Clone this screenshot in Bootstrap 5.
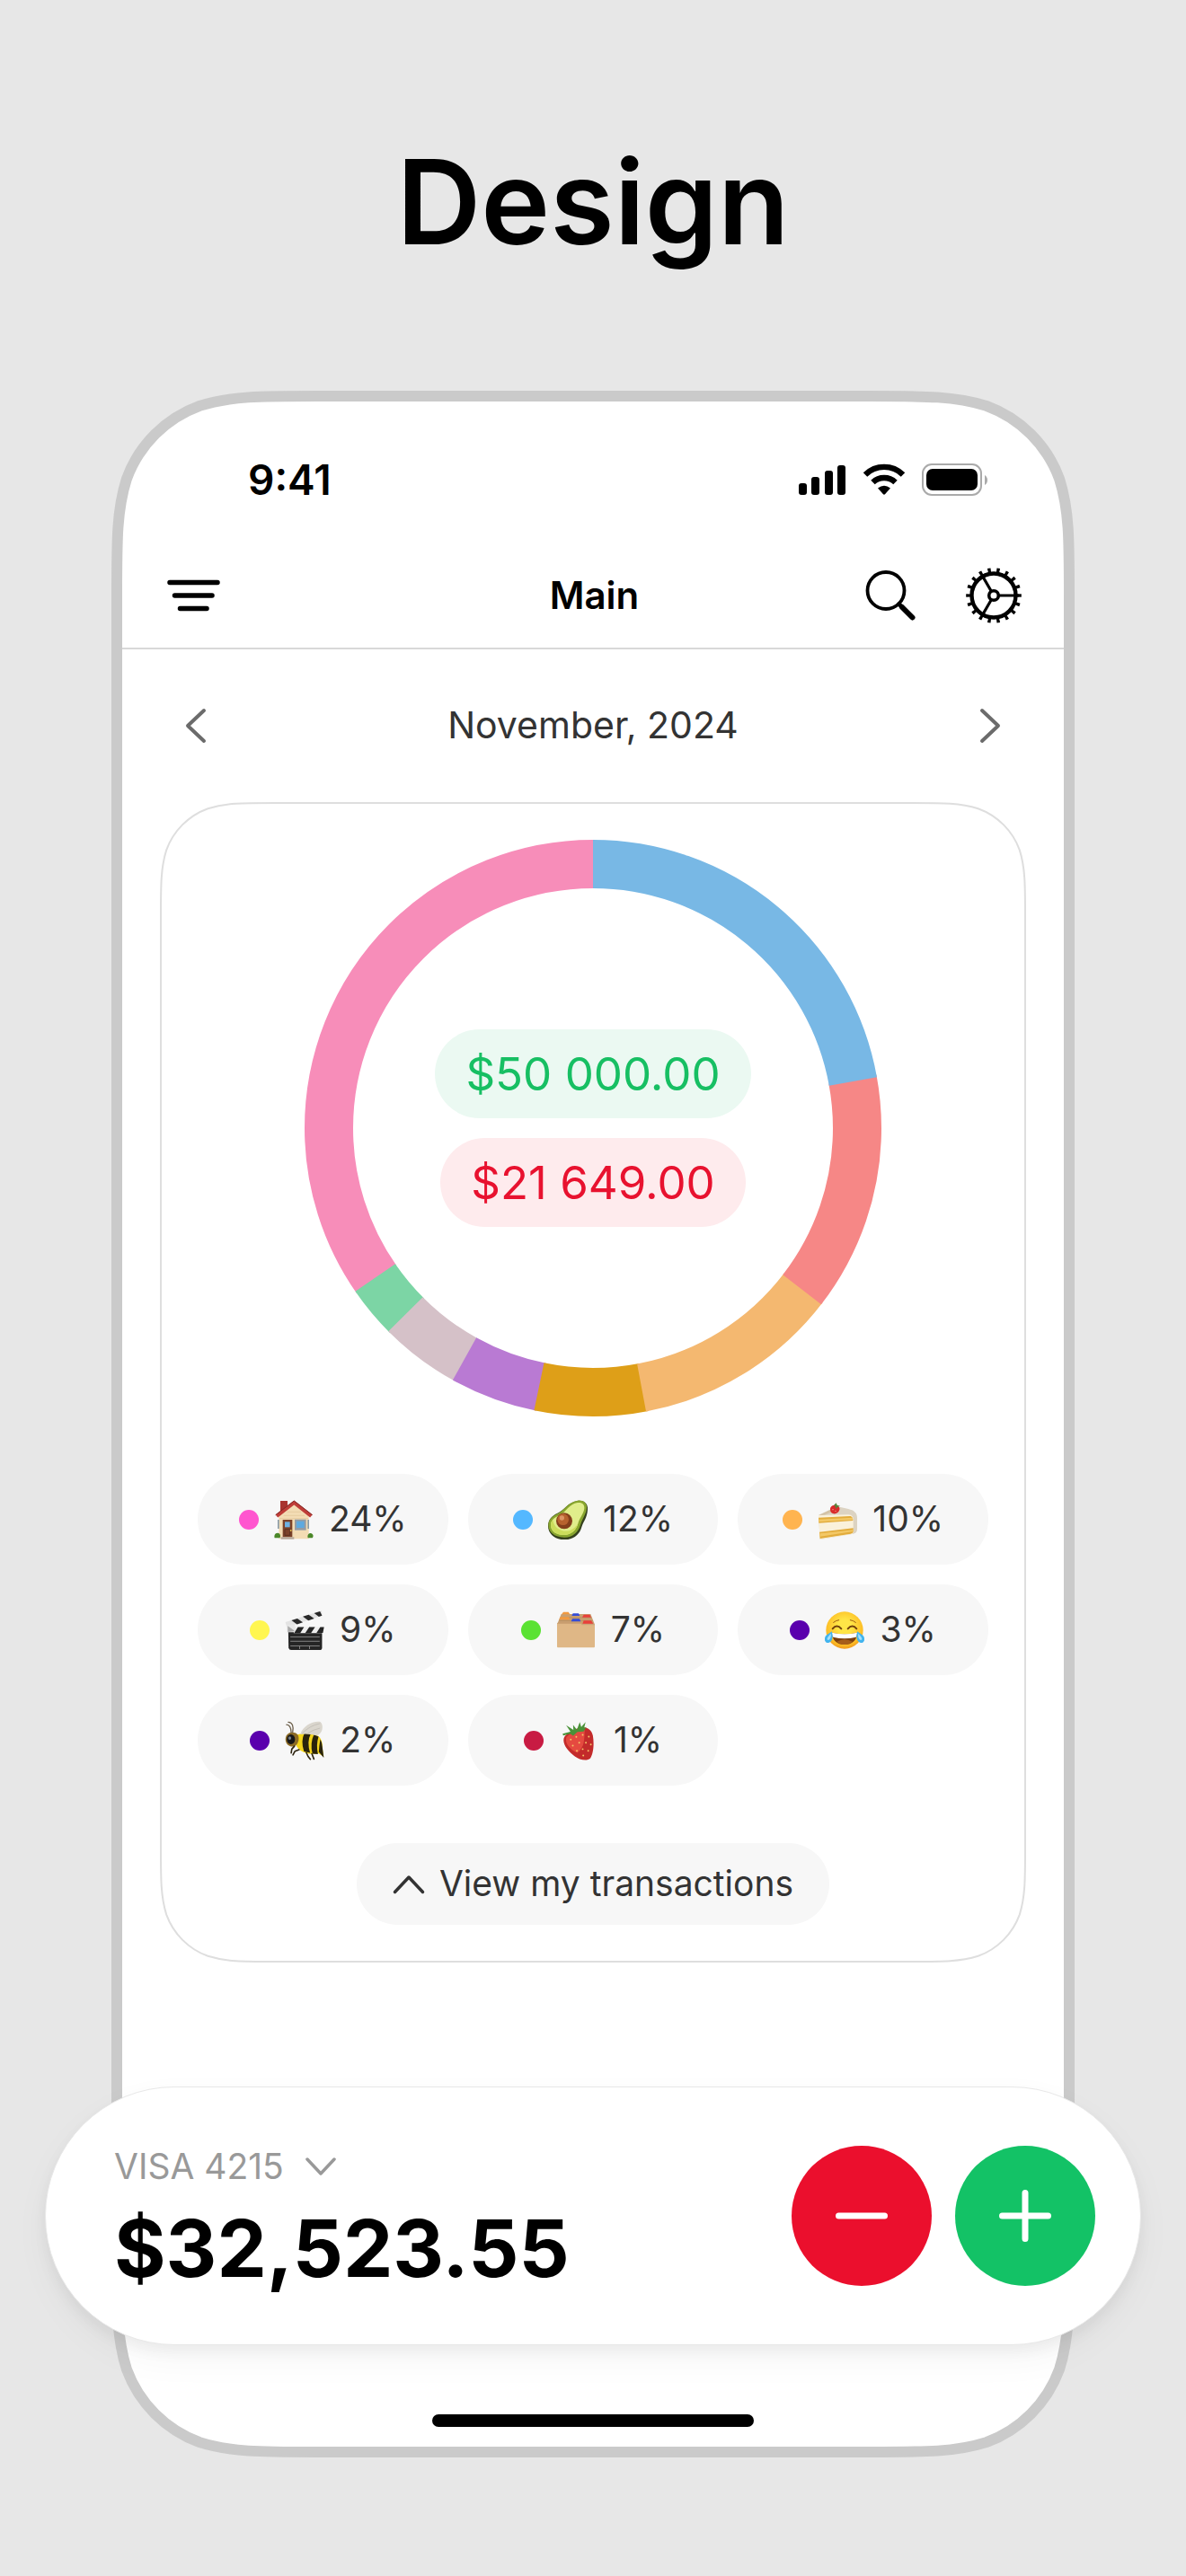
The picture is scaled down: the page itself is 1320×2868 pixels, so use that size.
<!DOCTYPE html>
<html lang="en">
<head>
<meta charset="utf-8">
<meta name="viewport" content="width=device-width, initial-scale=1">
<title>Design</title>
<link rel="stylesheet" href="https://cdn.jsdelivr.net/npm/bootstrap@5.3.0/dist/css/bootstrap.min.css">
<style>
  body { background: #e7e7e7; color: #000; font-family: Inter, "Liberation Sans", sans-serif; }
  svg { display: block; flex: none; }
  .plain { border: 0; background: none; padding: 0; color: inherit; }
  .headline { font-size: 130px; line-height: 136px; font-weight: 600; padding: 157px 0 142px; }

  /* Frames with continuous corners, drawn as nine-slice images */
  .device {
    margin: 0 124px 132px; border: 12px solid transparent;
    border-image: url("data:image/svg+xml,%3Csvg xmlns='http://www.w3.org/2000/svg' width='520' height='520'%3E%3Cpath fill='%23fff' stroke='%23cacaca' stroke-width='12' d='M229.2 6H290.8C355.1 6 387.2 6 421.8 16.9C459.6 30.7 489.3 60.4 503.1 98.2C514 132.8 514 164.9 514 229.2V290.8C514 355.1 514 387.2 503.1 421.8C489.3 459.6 459.6 489.3 421.8 503.1C387.2 514 355.1 514 290.8 514H229.2C164.9 514 132.8 514 98.2 503.1C60.4 489.3 30.7 459.6 16.9 421.8C6 387.2 6 355.1 6 290.8V229.2C6 164.9 6 132.8 16.9 98.2C30.7 60.4 60.4 30.7 98.2 16.9C132.8 6 164.9 6 229.2 6Z'/%3E%3C/svg%3E") 240 fill / 240px stretch;
  }
  .summary {
    margin: 0 42px; border: 2px solid transparent; padding: 40px;
    border-image: url("data:image/svg+xml,%3Csvg xmlns='http://www.w3.org/2000/svg' width='300' height='300'%3E%3Cpath fill='%23fff' stroke='%23dedede' stroke-width='2' d='M127.9 1H172.1C208.7 1 226.9 1 246.6 7.2C268.1 15 285 31.9 292.8 53.4C299 73.1 299 91.3 299 127.9V172.1C299 208.7 299 226.9 292.8 246.6C285 268.1 268.1 285 246.6 292.8C226.9 299 208.7 299 172.1 299H127.9C91.3 299 73.1 299 53.4 292.8C31.9 285 15 268.1 7.2 246.6C1 226.9 1 208.7 1 172.1V127.9C1 91.3 1 73.1 7.2 53.4C15 31.9 31.9 15 53.4 7.2C73.1 1 91.3 1 127.9 1Z'/%3E%3C/svg%3E") 140 fill / 140px stretch;
  }

  .statusbar { height: 158px; padding: 16px 85px 0 140px; font-size: 46px; font-weight: 600; }
  .titlebar { height: 118px; padding: 0 47px 0 50px; border-bottom: 2px solid #d8d8d8; }
  .titlebar h2 { font-size: 42px; font-weight: 600; }
  .tools { gap: 55px; }
  .month { height: 170px; padding: 0 70px; font-size: 41px; color: #333; }

  .chart { position: relative; width: 642px; max-width: 100%; }
  .chart > svg { width: 100%; height: auto; }
  .totals { position: absolute; inset: 0; gap: 22px; font-size: 51px; line-height: 99px; }
  .totals span { padding: 0 34px; border-radius: 50px; }
  .income { background: #ebf9f2; color: #17bf63; }
  .spent { background: #feebed; color: #e8122f; }

  .shares { display: grid; grid-template-columns: repeat(3, 1fr); gap: 22px; margin: 64px 0; }
  .share { height: 101px; gap: 17px; border-radius: 51px; background: #f7f7f7; color: #333; font-size: 39px; }
  .share i { width: 22px; height: 22px; border-radius: 50%; background: var(--tone); }
  .more { height: 91px; padding: 0 40px; gap: 16px; border-radius: 46px; background: #f7f7f7; color: #333; font-size: 39px; }

  .wallet {
    margin: 138px -86px 77px; height: 288px; padding: 0 50px 0 76px; border-radius: 144px;
    background: #fff; border: 1px solid #e8e8e8;
    box-shadow: 0 8px 16px rgba(0,0,0,.05), 0 16px 40px rgba(0,0,0,.04);
  }
  .account { gap: 24px; font-size: 39px; line-height: 50px; color: #999; }
  .balance { font-size: 88px; line-height: 88px; font-weight: 700; margin-top: 22px; }
  .actions { gap: 26px; }
  .round { width: 156px; height: 156px; border-radius: 50%; }
  .round.minus { background: #eb0f2d; }
  .round.plus { background: #13c266; }
  .homebar { width: 358px; height: 14px; border-radius: 7px; background: #000; margin: 0 auto 22px; }
</style>
</head>
<body>
<h1 class="headline text-center m-0">Design</h1>

<main class="device d-flex flex-column">
  <div class="statusbar d-flex align-items-center justify-content-between">
    <span>9:41</span>
    <div class="d-flex align-items-center">
      <svg width="210" height="36" viewBox="0 0 210 36" aria-hidden="true">
        <rect x="0" y="22" width="9" height="13" rx="3"/><rect x="14" y="15" width="9" height="20" rx="3"/><rect x="29" y="8" width="9" height="27" rx="3"/><rect x="43" y="2" width="9" height="33" rx="3"/>
        <g fill="none" stroke="#000" stroke-width="6.400"><path d="M74 12.500A30 30 0 0 1 116 12.500"/><path d="M82.500 21A18 18 0 0 1 107.500 21"/></g>
        <path d="M88 27.500Q95 22 102 27.500L96.200 34Q95 35.500 93.800 34Z"/>
        <rect x="138" y="1" width="65" height="34" rx="10" fill="none" stroke="#aaa" stroke-width="2"/>
        <rect x="142" y="6" width="57" height="24" rx="7"/>
        <path d="M207 13Q210 15 210 18.500T207 24Z" fill="#aaa"/>
      </svg>
    </div>
  </div>

  <header class="titlebar d-flex align-items-center">
    <div class="col d-flex">
      <button class="plain" type="button" aria-label="Menu">
        <svg width="60" height="36" viewBox="0 0 60 36" stroke="#000" stroke-width="5.500" stroke-linecap="round"><path d="M3 3.500H56M8.500 18H50M14.500 32.500H44"/></svg>
      </button>
    </div>
    <h2 class="m-0">Main</h2>
    <div class="tools col d-flex justify-content-end align-items-center">
      <button class="plain" type="button" aria-label="Search">
        <svg width="57" height="58" viewBox="0 0 57 58" fill="none" stroke="#000" stroke-linecap="round"><circle cx="23" cy="23.500" r="20.500" stroke-width="3.800"/><path stroke-width="4.600" d="M37.500 38.500L41 42"/><path stroke-width="6" d="M41 42L52.500 53.500"/></svg>
      </button>
      <button class="plain" type="button" aria-label="Settings">
        <svg width="62" height="62" viewBox="-31 -31 62 62" fill="none" stroke="#000">
          <circle r="24.500" stroke-width="4.400"/>
          <circle r="28.300" stroke-width="5" pathLength="180" stroke-dasharray="3.400 6.600" stroke-dashoffset="1.700"/>
          <circle r="5.300" stroke-width="3.600"/>
          <path stroke-width="3.200" d="M6 0H28M-3 -5.200L-13 -22.500M-3 5.200L-13 22.500"/>
        </svg>
      </button>
    </div>
  </header>

  <div class="month d-flex align-items-center justify-content-between">
    <button class="plain" type="button" aria-label="Previous month"><svg width="24" height="40" viewBox="0 0 24 40" fill="none" stroke="#6b6b6b" stroke-width="4" stroke-linecap="round" stroke-linejoin="round"><path d="M21 3L3 20L21 37"/></svg></button>
    <span>November, 2024</span>
    <button class="plain" type="button" aria-label="Next month"><svg width="24" height="40" viewBox="0 0 24 40" fill="none" stroke="#6b6b6b" stroke-width="4" stroke-linecap="round" stroke-linejoin="round"><path d="M3 3L21 20L3 37"/></svg></button>
  </div>

  <section class="summary">
    <div class="chart mx-auto">
      <svg viewBox="-321 -321 642 642" role="img" aria-label="Spending by category">
        <g fill="none" stroke-width="54" transform="rotate(-90)">
          <circle r="294" stroke="#f78db9" pathLength="360" stroke-dasharray="125 360" stroke-dashoffset="-235"/>
          <circle r="294" stroke="#7cd5a5" pathLength="360" stroke-dasharray="10.800 360" stroke-dashoffset="-224.700"/>
          <circle r="294" stroke="#d5c1c8" pathLength="360" stroke-dasharray="16.600 360" stroke-dashoffset="-208.600"/>
          <circle r="294" stroke="#b97ad3" pathLength="360" stroke-dasharray="17.800 360" stroke-dashoffset="-191.300"/>
          <circle r="294" stroke="#de9f18" pathLength="360" stroke-dasharray="22.900 360" stroke-dashoffset="-168.900"/>
          <circle r="294" stroke="#f4b870" pathLength="360" stroke-dasharray="42.200 360" stroke-dashoffset="-127.200"/>
          <circle r="294" stroke="#f68786" pathLength="360" stroke-dasharray="48.400 360" stroke-dashoffset="-79.300"/>
          <circle r="294" stroke="#78b8e5" pathLength="360" stroke-dasharray="79.800 360"/>
        </g>
      </svg>
      <div class="totals d-flex flex-column align-items-center justify-content-center">
        <span class="income">$50 000.00</span>
        <span class="spent">$21 649.00</span>
      </div>
    </div>

    <div class="shares">
      <div class="share d-flex align-items-center justify-content-center" style="--tone:#ff55cf"><i></i>
        <svg width="44" height="44" viewBox="0 0 132 132" role="img" aria-label="House">
          <path fill="#a93430" d="M21 3h24v36H21z"/>
          <path fill="#f3dcb4" d="M16 52L67 12l49 40v78H16z"/>
          <path stroke="#e0c496" stroke-width="2" d="M44 40h46M32 52h70M18 62h96"/>
          <path fill="none" stroke="#bf3d38" stroke-width="12" stroke-linejoin="round" d="M9 54L67 9l57 45"/>
          <path fill="none" stroke="#812824" stroke-width="3" d="M5 50L67 3l61 47"/>
          <path fill="#7b4229" d="M29 66h32v58H29z"/><path fill="#6eb1e2" d="M36 73h17v18H36z"/><path fill="none" stroke="#4f2a1b" stroke-width="2" d="M36 98h17v20H36z"/><circle cx="56" cy="102" r="3" fill="#e4bd4e"/>
          <path fill="#939ba4" d="M69 65h38v36H69z"/><path fill="#5ea9df" d="M75 71h26v22H75z"/><path fill="#8c9ca6" d="M12 66h5v30h-5zM112 66h5v30h-5z"/>
          <path fill="#4b8729" d="M2 127c-3-10 2-17 10-17s12 10 7 17zM113 127c-3-9 2-17 10-16 8 2 10 10 5 16z"/>
          <path fill="#b6a89a" d="M23 124h44v7H23z"/>
        </svg>24%</div>
      <div class="share d-flex align-items-center justify-content-center" style="--tone:#54b8ff"><i></i>
        <svg width="44" height="44" viewBox="0 0 132 132" role="img" aria-label="Avocado">
          <path fill="#35411e" d="M98 3c22-4 36 10 34 30-2 28-14 38-20 58-6 25-29 42-57 42C25 133 0 114 0 87c0-24 17-36 30-42C53 36 65 8 98 3z"/>
          <path fill="#88a52e" d="M98 2c20-3 32 7 31 25-2 22-15 36-21 56-7 24-25 42-54 42C23 125 1 108 1 85c0-23 18-33 32-40C55 34 66 7 98 2z"/>
          <path fill="#e0ed8b" d="M99 9c15-2 23 6 22 19-2 18-15 31-21 51-6 22-22 38-47 38C28 117 9 105 9 84c0-17 13-26 29-33C61 40 70 13 99 9z"/>
          <path fill="#cbdd5b" d="M53 117C28 117 9 105 9 84c0-8 3-14 7-18 4 29 28 41 53 37 16-4 26-16 31-24-6 22-22 38-47 38z"/>
          <circle cx="54" cy="70" r="27" fill="#843f1b"/><circle cx="50" cy="65" r="19" fill="#b7622e"/><circle cx="46" cy="60" r="8" fill="#dc9565"/>
        </svg>12%</div>
      <div class="share d-flex align-items-center justify-content-center" style="--tone:#ffb450"><i></i>
        <svg width="44" height="44" viewBox="0 0 132 132" role="img" aria-label="Cake">
          <path fill="#dcd3c2" d="M3 51L58 25c8-5 38 3 57 9 12 7 17 13 17 27v35c0 12-5 15-14 17L8 132z"/>
          <path fill="#faf1db" d="M3 51l100-2c13 0 16 9 16 20v38c0 5-4 7-9 8L8 132z"/>
          <path fill="#e2ac3c" d="M3 59l104-5c9 0 11 7 11 15L4 77zM6 107l113-13v11c0 5-4 7-9 8L8 129z"/>
          <path fill="#f3c866" d="M4 65l113-6 1 7L4 73zM7 112l112-12v5L8 122z"/>
          <path fill="#c8ae82" d="M3 51L58 25l15 3-50 22z" opacity=".45"/>
          <path fill="#d92b2c" d="M42 31c0-10 9-14 17-14 9 0 17 8 14 16-3 10-12 14-19 13-8 0-12-7-12-15z"/>
          <path fill="#59833c" d="M54 18l8-8 3 7 10 3-10 5-4 5-2-8z"/><circle cx="51" cy="32" r="2" fill="#f7a48f"/><circle cx="60" cy="37" r="2" fill="#f7a48f"/>
        </svg>10%</div>
      <div class="share d-flex align-items-center justify-content-center" style="--tone:#fff650"><i></i>
        <svg width="44" height="44" viewBox="0 0 132 136" role="img" aria-label="Clapper board">
          <path fill="#e3e3e3" d="M0 40L124 1l3 17L5 58z"/>
          <path fill="#292929" d="M21 34l20-6 19 13-20 7zM60 21l20-6 19 13-20 7zM99 9l20-6 7 15-11 4z"/>
          <path fill="#e8e8e8" d="M4 50l28-2 6 28H6z"/><path fill="#aaa" d="M8 53l25 18-25 3z"/>
          <path fill="#252525" d="M10 75h116v53q0 8-8 8H20q-8 0-9-8z"/>
          <path fill="#eee" d="M36 57h97l-5 21H28z"/><path fill="#242424" d="M43 57h21L51 78H30zM82 57h20L88 78H68zM120 57h13l-4 20h-22z"/>
          <path stroke="#858585" stroke-width="3" d="M17 91h101M17 106h101M17 122h101M49 123v10M83 123v10"/>
        </svg>9%</div>
      <div class="share d-flex align-items-center justify-content-center" style="--tone:#5ae233"><i></i>
        <svg width="44" height="44" viewBox="0 0 132 132" role="img" aria-label="Card file">
          <path fill="#c99f70" d="M17 12h98l14 35H3z"/>
          <path stroke="#ad865c" stroke-width="2" d="M14 24h104M10 34h112"/>
          <path fill="#f29a40" d="M24 5h17l5 8H18zM14 22h28l4 9H10z"/><path fill="#344cd6" d="M56 10h19l4 8H52zM54 28h24l4 9H50z"/><path fill="#e93f3a" d="M92 14h20l5 9H87zM92 34h25l7 10H88z"/>
          <path fill="#dfb786" d="M3 43h83v4h43v74q0 3-3 3H6q-3 0-3-3z"/><path fill="none" stroke="#c29869" stroke-width="2" d="M3 43h83v4h43"/>
        </svg>7%</div>
      <div class="share d-flex align-items-center justify-content-center" style="--tone:#5a00ad"><i></i>
        <svg width="44" height="44" viewBox="0 0 132 132" role="img" aria-label="Face with tears of joy">
          <defs><radialGradient id="face" cx=".5" cy=".4" r=".62"><stop offset=".3" stop-color="#ffe547"/><stop offset=".8" stop-color="#fdbd25"/><stop offset="1" stop-color="#ec921b"/></radialGradient></defs>
          <circle cx="66" cy="66" r="62" fill="url(#face)"/>
          <path fill="#7a3e0e" d="M24 74q42 9 84 0c0 25-17 40-42 40S24 99 24 74z"/><path fill="#fff" d="M24 74q42 9 84 0c0 6-2 13-4 15q-38 9-76 0c-3-4-4-9-4-15z"/><path fill="#a65d1a" d="M40 104q26-15 52 0-11 10-26 10t-26-10z"/>
          <path fill="none" stroke="#71400d" stroke-width="6" stroke-linecap="round" d="M26 61q14-17 29 0M77 61q15-17 29 0"/>
          <path fill="none" stroke="#9a5c12" stroke-width="3" stroke-linecap="round" d="M29 40q8-7 18-8M103 40q-8-7-18-8"/>
          <path fill="#42b4ee" d="M23 70c6 17 2 36-10 38S-3 97 1 89c4-9 13-10 22-19zM109 70c-6 17-2 36 10 38s16-11 12-19c-4-9-13-10-22-19z"/>
          <path fill="#a5e1fb" d="M20 77c2 12-2 20-9 22-8-4 2-13 9-22zM112 77c-2 12 2 20 9 22 8-4-2-13-9-22z"/>
        </svg>3%</div>
      <div class="share d-flex align-items-center justify-content-center" style="--tone:#5a00ad"><i></i>
        <svg width="44" height="44" viewBox="0 0 132 136" role="img" aria-label="Bee">
          <path fill="#f4d51b" d="M37 48q39-13 76 4 16 13 14 40l5 31-19-12q-37 9-66-13-21-20-10-50z"/>
          <path fill="#29230c" d="M65 43l22 2q-14 27-2 65l-21-5q-12-36 1-62zM98 47l16 7q-9 28-2 60l-19-1q-9-36 5-66zM120 63q6 10 7 25l5 39-17-20q1-22 5-44z"/>
          <path fill="#dad6cd" d="M51 46C61 18 91 0 120 3c13 11 9 41-12 47q-30-8-57-4z"/><path fill="none" stroke="#b9b5ac" stroke-width="2" d="M57 44Q84 15 119 9M76 43q21-14 43-18"/>
          <path fill="#8c6b25" d="M1 57c4-18 28-23 41-10 9 13 1 38-13 41C13 91-3 78 1 57z"/><ellipse cx="19" cy="63" rx="14" ry="17" fill="#171717"/><ellipse cx="15" cy="59" rx="5" ry="6" fill="#768189"/>
          <path fill="none" stroke="#6e614d" stroke-width="4" stroke-linecap="round" d="M20 40Q19 14 4 13M25 39Q31 6 10 4"/>
          <path fill="none" stroke="#2c230e" stroke-width="5" stroke-linecap="round" stroke-linejoin="round" d="M31 87l-9 10-2 13M47 99l-14 5-7 13M72 109l6 13 8 10M91 113l7 18"/>
        </svg>2%</div>
      <div class="share d-flex align-items-center justify-content-center" style="--tone:#c81b43"><i></i>
        <svg width="44" height="44" viewBox="0 0 132 136" role="img" aria-label="Strawberry">
          <path fill="#c32b2b" d="M18 53c12-12 36-25 57-31 18-2 35 7 40 28 5 29 2 62-9 79-12 11-39 4-53-7C28 104 5 74 18 53z"/>
          <path fill="#e54a40" d="M24 56c18-17 45-28 63-24-2 31 1 57-25 78C35 99 17 76 24 56z"/>
          <path fill="#4a9238" d="M11 44l27-7-15-22 25 16-1-17 13 16 10-26 5 17 15-17-5 20 8-3-10 15-21 2-15 13-10-7-24 6z"/>
          <g fill="#f6c567"><circle cx="39" cy="64" r="3"/><circle cx="58" cy="55" r="3"/><circle cx="80" cy="48" r="3"/><circle cx="101" cy="54" r="3"/><circle cx="46" cy="85" r="3"/><circle cx="68" cy="75" r="3"/><circle cx="91" cy="75" r="3"/><circle cx="108" cy="81" r="3"/><circle cx="60" cy="103" r="3"/><circle cx="80" cy="97" r="3"/><circle cx="99" cy="103" r="3"/><circle cx="82" cy="119" r="3"/></g>
        </svg>1%</div>
    </div>

    <button class="more plain d-flex align-items-center mx-auto" type="button">
      <svg width="36" height="22" viewBox="0 0 36 22" fill="none" stroke="#333" stroke-width="3.500" stroke-linecap="round" stroke-linejoin="round"><path d="M2.500 19.500L18 3L33.500 19.500"/></svg>
      View my transactions
    </button>
  </section>

  <section class="wallet d-flex align-items-center justify-content-between">
    <div>
      <button class="account plain d-flex align-items-center" type="button">VISA 4215
        <svg width="34" height="22" viewBox="0 0 34 22" fill="none" stroke="#999" stroke-width="3.500" stroke-linecap="round" stroke-linejoin="round"><path d="M2 3L17 19L32 3"/></svg>
      </button>
      <div class="balance">$32,523.55</div>
    </div>
    <div class="actions d-flex">
      <button class="round minus plain d-flex align-items-center justify-content-center" type="button" aria-label="Add expense"><svg width="58" height="58" viewBox="0 0 58 58" stroke="#fff" stroke-width="7" stroke-linecap="round"><path d="M3.500 29H54.500"/></svg></button>
      <button class="round plus plain d-flex align-items-center justify-content-center" type="button" aria-label="Add income"><svg width="58" height="58" viewBox="0 0 58 58" stroke="#fff" stroke-width="7" stroke-linecap="round"><path d="M3.500 29H54.500M29 3.500V54.500"/></svg></button>
    </div>
  </section>
  <div class="homebar"></div>
</main>
<script src="https://cdn.jsdelivr.net/npm/bootstrap@5.3.0/dist/js/bootstrap.bundle.min.js"></script>
</body>
</html>
